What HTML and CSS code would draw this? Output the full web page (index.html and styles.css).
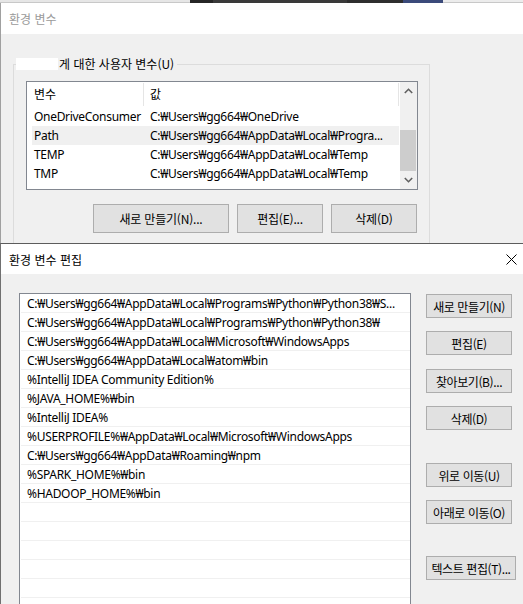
FILE: index.html
```html
<!DOCTYPE html>
<html lang="ko">
<head>
<meta charset="utf-8">
<title>환경 변수 편집</title>
<link rel="stylesheet" href="styles.css">
</head>
<body>
<div class="desktop">
  <div class="strip">
    <span class="s1"></span><span class="s2"></span><span class="s3"></span><span class="s4"></span><span class="s5"></span><span class="s6"></span>
  </div>

  <section class="win win-back">
    <header class="title title-inactive"><span>환경 변수</span></header>
    <div class="back-body">
      <div class="group">
        <div class="legend"><span class="redact"></span><span class="legend-text">게 대한 사용자 변수(U)</span></div>
        <div class="listview">
          <div class="lv-main">
            <div class="lv-head">
              <div class="lv-h h1">변수</div>
              <div class="lv-h h2">값</div>
            </div>
            <div class="lv-row"><span class="c1">OneDriveConsumer</span><span class="c2">C:₩Users₩gg664₩OneDrive</span></div>
            <div class="lv-row sel"><span class="c1">Path</span><span class="c2">C:₩Users₩gg664₩AppData₩Local₩Progra...</span></div>
            <div class="lv-row"><span class="c1">TEMP</span><span class="c2">C:₩Users₩gg664₩AppData₩Local₩Temp</span></div>
            <div class="lv-row"><span class="c1">TMP</span><span class="c2">C:₩Users₩gg664₩AppData₩Local₩Temp</span></div>
          </div>
          <div class="vscroll">
            <div class="arrow"><svg width="9" height="6" viewBox="0 0 9 6"><polyline points="0.8,5 4.5,1.3 8.2,5" fill="none" stroke="#606060" stroke-width="1.6"/></svg></div>
            <div class="track"></div>
            <div class="thumb"></div>
            <div class="arrow"><svg width="9" height="6" viewBox="0 0 9 6"><polyline points="0.8,1 4.5,4.7 8.2,1" fill="none" stroke="#606060" stroke-width="1.6"/></svg></div>
          </div>
        </div>
        <div class="btn-row">
          <button class="btn bw-wide">새로 만들기(N)...</button>
          <button class="btn bw-std">편집(E)...</button>
          <button class="btn bw-std">삭제(D)</button>
        </div>
      </div>
    </div>
  </section>

  <section class="win win-front">
    <header class="title">
      <span>환경 변수 편집</span>
      <svg class="close" width="11" height="11" viewBox="0 0 11 11"><path d="M0.5 0.5 L10.5 10.5 M10.5 0.5 L0.5 10.5" stroke="#000" stroke-width="1" fill="none"/></svg>
    </header>
    <div class="front-body">
      <div class="pathlist">
        <div class="pl-row">C:₩Users₩gg664₩AppData₩Local₩Programs₩Python₩Python38₩S...</div>
        <div class="pl-row">C:₩Users₩gg664₩AppData₩Local₩Programs₩Python₩Python38₩</div>
        <div class="pl-row">C:₩Users₩gg664₩AppData₩Local₩Microsoft₩WindowsApps</div>
        <div class="pl-row">C:₩Users₩gg664₩AppData₩Local₩atom₩bin</div>
        <div class="pl-row">%IntelliJ IDEA Community Edition%</div>
        <div class="pl-row">%JAVA_HOME%₩bin</div>
        <div class="pl-row">%IntelliJ IDEA%</div>
        <div class="pl-row">%USERPROFILE%₩AppData₩Local₩Microsoft₩WindowsApps</div>
        <div class="pl-row">C:₩Users₩gg664₩AppData₩Roaming₩npm</div>
        <div class="pl-row">%SPARK_HOME%₩bin</div>
        <div class="pl-row">%HADOOP_HOME%₩bin</div>
        <div class="pl-row"></div>
        <div class="pl-row"></div>
        <div class="pl-row"></div>
        <div class="pl-row"></div>
        <div class="pl-row"></div>
        <div class="pl-row"></div>
      </div>
      <div class="side">
        <button class="btn sb">새로 만들기(N)</button>
        <button class="btn sb">편집(E)</button>
        <button class="btn sb g1">찾아보기(B)...</button>
        <button class="btn sb">삭제(D)</button>
        <button class="btn sb g20">위로 이동(U)</button>
        <button class="btn sb">아래로 이동(O)</button>
        <button class="btn sb sb-wide g19">텍스트 편집(T)...</button>
      </div>
    </div>
  </section>
</div>
</body>
</html>
```

FILE: styles.css
```css
* { box-sizing: border-box; }
html, body { margin: 0; padding: 0; }
body {
  width: 523px;
  height: 604px;
  overflow: hidden;
  background: #f0f0f0;
  font-family: "Noto Sans", "Noto Sans CJK KR", sans-serif;
  font-size: 12px;
  color: #000;
}
.desktop { position: relative; width: 523px; height: 604px; overflow: hidden; }

.strip { display: flex; height: 3px; }
.strip span { display: block; height: 3px; }
.s1 { width: 190px; background: #e6e6e6; border-bottom: 1px solid #c8c8c8; }
.s2 { width: 23px; background: #262626; }
.s3 { width: 134px; background: #3a3a3a; }
.s4 { width: 56px; background: #2e2e2e; }
.s5 { width: 40px; background: #3b4a7a; }
.s6 { flex: 1; background: #ececec; border-bottom: 1px solid #c8c8c8; }

.win { position: absolute; left: 0; width: 523px; background: #f0f0f0; overflow: hidden; }
.win-back { top: 3px; height: 240px; border-left: 1px solid #a0a0a0; }
.win-front { top: 243px; height: 361px; border-top: 1px solid #5c5c5c; border-left: 1px solid #707070; }

.title {
  height: 30px;
  background: #fff;
  display: flex;
  align-items: center;
  justify-content: space-between;
  padding-left: 8px;
  padding-right: 5px;
  font-family: "Noto Sans CJK KR", sans-serif;
  font-size: 12px;
  color: #000;
}
.win-back .title { height: 31px; padding-bottom: 1px; }
.title-inactive { color: #9a9a9a; }

/* back window */
.back-body { padding: 30px 0 0 12px; }
.group {
  position: relative;
  width: 417px;
  height: 200px;
  border: 1px solid #dcdcdc;
  padding: 16px 0 0 12px;
}
.legend {
  position: absolute;
  left: 2px;
  top: -8px;
  height: 14px;
  display: flex;
  align-items: center;
  background: #f0f0f0;
  padding-right: 3px;
}
.redact { display: block; width: 42px; height: 12px; background: #fff; margin-right: 1px; }
.legend-text { font-family: "Noto Sans CJK KR", sans-serif; font-size: 12px; line-height: 14px; }

.listview {
  display: flex;
  width: 392px;
  height: 109px;
  border: 1px solid #828790;
  background: #fff;
}
.lv-main { width: 373px; }
.lv-head { display: flex; height: 25px; padding-top: 1px; }
.lv-h {
  height: 23px;
  line-height: 22px;
  font-family: "Noto Sans CJK KR", sans-serif;
  border-right: 1px solid #e5e5e5;
}
.h1 { width: 117px; padding-left: 7px; }
.h2 { width: 255px; padding-left: 6px; }
.lv-row {
  display: flex;
  height: 19px;
  line-height: 18px;
  padding-top: 1px;
  margin-left: 5px;
  width: 367px;
  letter-spacing: -0.3px;
  white-space: nowrap;
}
.lv-row.sel { background: #f0f0f0; }
.c1 { width: 118px; padding-left: 2px; }
.c2 { flex: 1; }

.vscroll {
  width: 17px;
  background: #f0f0f0;
  display: flex;
  flex-direction: column;
  padding-right: 1px;
}
.arrow { height: 17px; display: flex; align-items: center; justify-content: center; }
.track { height: 31px; }
.thumb { height: 41px; background: #cdcdcd; }

.btn-row { display: flex; gap: 8px; margin-top: 14px; padding-left: 67px; }
.btn {
  height: 29px;
  background: #e1e1e1;
  border: 1px solid #adadad;
  font-family: "Noto Sans CJK KR", sans-serif;
  font-size: 12px;
  color: #000;
  padding: 0;
  margin: 0;
  letter-spacing: -0.2px;
}
.bw-wide { width: 136px; }
.bw-std { width: 86px; }

/* front window */
.front-body { display: flex; padding: 19px 0 0 18px; gap: 15px; }
.pathlist {
  width: 392px;
  height: 330px;
  border: 1px solid #828790;
  background: #fff;
  flex: none;
}
.pl-row {
  height: 19px;
  line-height: 16px;
  padding-top: 2px;
  margin-left: 1px;
  border-bottom: 1px solid #f0f0f0;
  padding-left: 6px;
  white-space: nowrap;
  letter-spacing: -0.3px;
}
.side { display: flex; flex-direction: column; gap: 13px; padding-top: 1px; }
.sb { width: 86px; height: 24px; letter-spacing: -0.4px; }
.sb-wide { width: 90px; }
.g1 { margin-top: 1px; }
.g20 { margin-top: 20px; }
.g19 { margin-top: 19px; }
.close { display: block; margin-right: 1px; }
```
